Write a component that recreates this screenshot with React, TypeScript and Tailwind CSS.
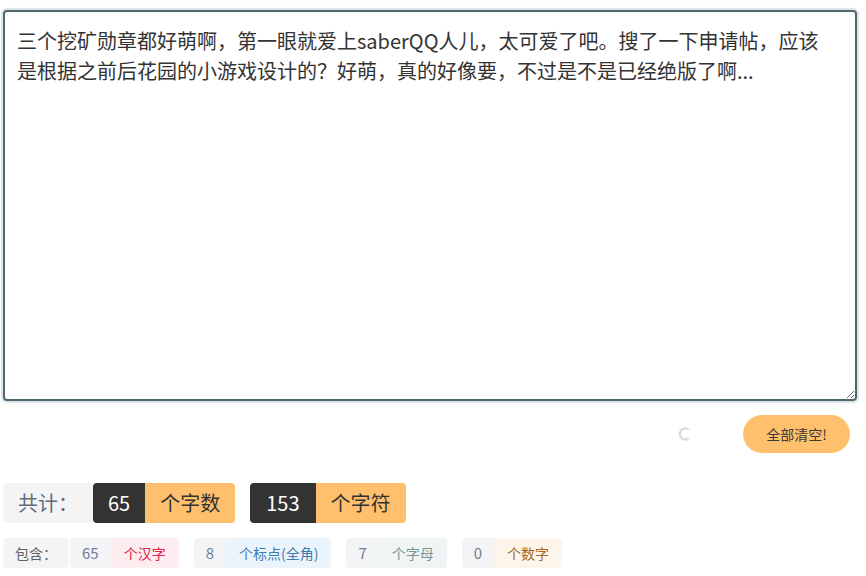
const text =
  "三个挖矿勋章都好萌啊，第一眼就爱上saberQQ人儿，太可爱了吧。搜了一下申请帖，应该是根据之前后花园的小游戏设计的？好萌，真的好像要，不过是不是已经绝版了啊...";

const details = [
  { n: 65, label: "个汉字", box: "bg-[#fdedf0] text-[#dd2347]" },
  { n: 8, label: "个标点(全角)", box: "bg-[#ebf4fb] text-[#3a7bb0]" },
  { n: 7, label: "个字母", box: "bg-[#f1f4f4] text-[#769797]" },
  { n: 0, label: "个数字", box: "bg-[#fdf5ea] text-[#a4661c]" },
];

function Spinner() {
  return (
    <svg width="14" height="14" viewBox="0 0 14 14" aria-hidden="true">
      <path d="M10 2.2 A5.5 5.5 0 1 0 10 11.8" fill="none" stroke="#dcdcdc" strokeWidth="2.2" strokeLinecap="round" />
    </svg>
  );
}

export default function App() {
  return (
    <div className="min-h-[576px] w-[866px] bg-white pt-[10px] font-['Noto_Sans_CJK_SC',sans-serif] text-[#333]">
      <div className="pl-[3px] pr-[9px]">
        <textarea
          defaultValue={text}
          spellCheck={false}
          className="block h-[391px] w-full rounded-[4px] border-2 border-[#4e676d] pl-3 pr-7 pt-[14px] text-[20px] leading-[30px] text-[#333] shadow-[0_0_1px_2px_#dde3e6] outline-none"
        />
      </div>

      <div className="mt-[14px] flex items-center justify-end gap-[51px] pr-4">
        <Spinner />
        <button className="h-[38px] w-[107px] rounded-full bg-[#fec06c] text-[14px] text-[#3a3a3a]">全部清空!</button>
      </div>

      <div className="mt-[30px] flex gap-[15px] pl-[3px] text-[20px] leading-[40px]">
        <div className="flex">
          <span className="rounded-l-[4px] bg-[#f4f4f5] px-[15px] text-[#5f6b7e]">共计：</span>
          <span className="rounded-l-[4px] bg-[#333333] px-[15px] text-white">65</span>
          <span className="rounded-r-[4px] bg-[#fec06c] px-[15px] text-[#333]">个字数</span>
        </div>
        <div className="flex">
          <span className="rounded-l-[4px] bg-[#333333] px-4 text-white">153</span>
          <span className="rounded-r-[4px] bg-[#fec06c] px-[15px] text-[#333]">个字符</span>
        </div>
      </div>

      <div className="mt-[15px] flex gap-[15px] pl-[3px] text-[14px] leading-[30px]">
        <div className="flex gap-px">
          <span className="rounded-[4px] bg-[#f4f4f5] px-3 text-[#606266]">包含：</span>
          <span className="flex">
            <span className="rounded-l-[4px] bg-[#f3f4f5] px-3 text-[15px] text-[#6f7b94]">{details[0].n}</span>
            <span className={`rounded-r-[4px] px-[13px] ${details[0].box}`}>{details[0].label}</span>
          </span>
        </div>
        {details.slice(1).map((d) => (
          <span key={d.label} className="flex">
            <span className="rounded-l-[4px] bg-[#f3f4f5] px-3 text-[15px] text-[#6f7b94]">{d.n}</span>
            <span className={`rounded-r-[4px] px-[13px] ${d.box}`}>{d.label}</span>
          </span>
        ))}
      </div>
    </div>
  );
}
